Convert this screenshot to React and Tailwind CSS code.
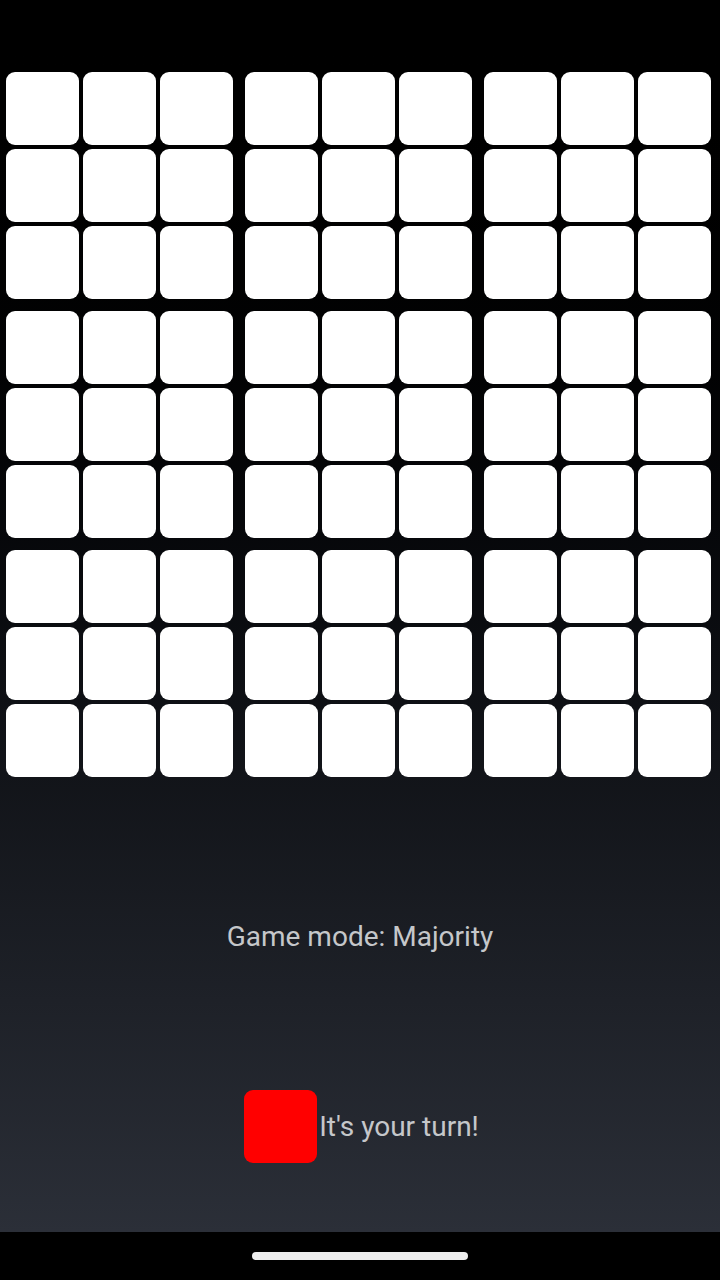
import React from "react";

const block = [0, 1, 2];

function Cell() {
  return <div className="h-[73px] w-[73px] rounded-[9px] bg-white" />;
}

function Block() {
  return (
    <div className="grid grid-cols-3 gap-[4px]">
      {Array.from({ length: 9 }).map((_, i) => (
        <Cell key={i} />
      ))}
    </div>
  );
}

export default function App() {
  return (
    <div
      className="flex h-[1280px] w-[720px] flex-col bg-black"
      style={{ fontFamily: "Roboto, 'Noto Sans', sans-serif" }}
    >
      <div className="flex h-[1232px] flex-col bg-gradient-to-b from-black to-[#2b2f38]">
        <div className="mt-[72px] flex flex-col gap-[12px] pl-[6px]">
          {block.map((r) => (
            <div key={r} className="flex gap-[12px]">
              {block.map((c) => (
                <Block key={c} />
              ))}
            </div>
          ))}
        </div>
        <div className="mt-[143px] text-center text-[28px] leading-[34px] text-[#c5c7ca]">
          Game mode: Majority
        </div>
        <div className="mt-[136px] flex items-center justify-center gap-[2px] pl-[3px]">
          <div className="h-[73px] w-[73px] rounded-[9px] bg-[#ff0000]" />
          <span className="text-[28px] leading-[34px] text-[#c5c7ca]">It's your turn!</span>
        </div>
      </div>
      <div className="flex flex-1 items-center justify-center">
        <div className="h-[8px] w-[216px] rounded-full bg-[#eeeeee]" />
      </div>
    </div>
  );
}
